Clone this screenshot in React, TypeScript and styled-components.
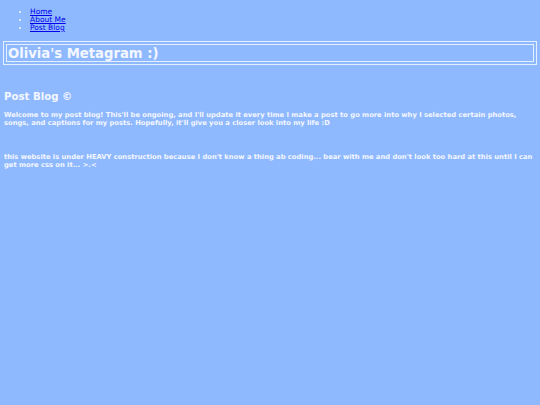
import React from "react";
import styled, { createGlobalStyle } from "styled-components";

const Global = createGlobalStyle`
  html, body {
    margin: 0;
    padding: 0;
    background: #8fb9ff;
  }
  body {
    padding: 4px 3px;
    font-family: "DejaVu Sans", Verdana, sans-serif;
    color: #f4f7ff;
  }
`;

const Nav = styled.ul`
  margin: 4px 0 0 0;
  padding-left: 27px;
  font-size: 7.5px;
  line-height: 8px;
  li::marker { color: #f4f7ff; }
`;

const NavLink = styled.a`
  color: #0000ee;
  text-decoration: underline;
`;

const Header = styled.header`
  margin-top: 9px;
  border: 4px double #e3eeff;
  padding: 0 1px;
  height: 16px;
  display: flex;
  align-items: center;
`;

const Title = styled.h1`
  margin: 0;
  font-size: 13.2px;
  font-weight: bold;
  color: #f4f7ff;
`;

const Section = styled.section`
  margin-top: 26px;
  padding-left: 1px;
`;

const Heading = styled.h2`
  margin: 0 0 8px;
  font-size: 10.2px;
  line-height: 12px;
  font-weight: bold;
`;

const Para = styled.p<{ $gap?: number }>`
  margin: ${(p) => p.$gap ?? 0}px 0 0;
  font-size: 6.75px;
  line-height: 8px;
  font-weight: bold;
`;

export default function App() {
  return (
    <>
      <Global />
      <Nav>
        <li><NavLink href="#">Home</NavLink></li>
        <li><NavLink href="#">About Me</NavLink></li>
        <li><NavLink href="#">Post Blog</NavLink></li>
      </Nav>
      <Header>
        <Title>Olivia's Metagram :)</Title>
      </Header>
      <Section>
        <Heading>Post Blog ©</Heading>
        <Para>
          Welcome to my post blog! This'll be ongoing, and I'll update it every time I make a post to go more into why I selected certain photos, songs, and captions for my posts. Hopefully, it'll give you a closer look into my life :D
        </Para>
        <Para $gap={26}>
          this website is under HEAVY construction because I don't know a thing ab coding... bear with me and don't look too hard at this until I can get more css on it... &gt;.&lt;
        </Para>
      </Section>
    </>
  );
}
